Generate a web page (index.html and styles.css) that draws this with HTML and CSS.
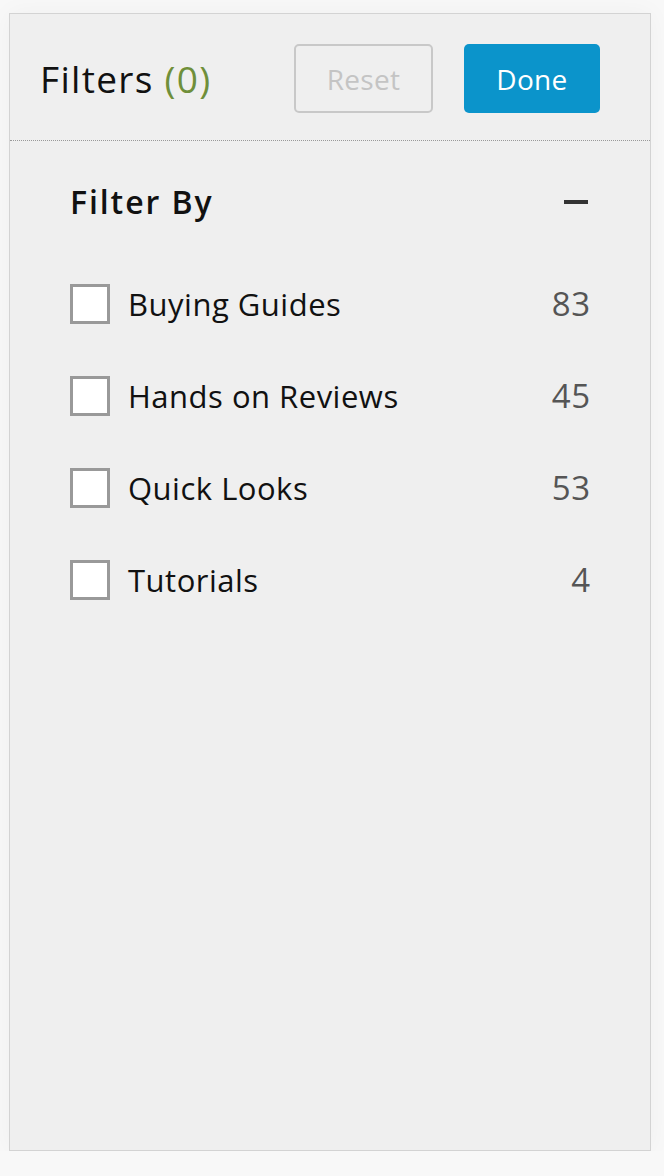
FILE: index.html
```html
<!DOCTYPE html>
<html lang="en">
  <head>
    <meta charset="UTF-8" />
    <meta name="viewport" content="width=device-width, initial-scale=1.0" />
    <title>Filters</title>
    <link rel="stylesheet" href="styles.css">
  </head>
  <body>
    <aside class="filter-panel" aria-label="Filters">
      <header class="panel-header">
        <h2 class="panel-title">Filters <span class="filter-count">(0)</span></h2>
        <div class="panel-actions">
          <button class="btn btn-reset" disabled>Reset</button>
          <button class="btn btn-done">Done</button>
        </div>
      </header>

      <section class="filter-group">
        <div class="group-head">
          <h3 class="group-title">Filter By</h3>
          <button class="collapse-toggle" aria-label="Collapse"></button>
        </div>
        <ul class="option-list">
          <li class="option">
            <label class="option-label">
              <span class="checkbox"></span>
              <span class="option-name">Buying Guides</span>
            </label>
            <span class="option-count">83</span>
          </li>
          <li class="option">
            <label class="option-label">
              <span class="checkbox"></span>
              <span class="option-name">Hands on Reviews</span>
            </label>
            <span class="option-count">45</span>
          </li>
          <li class="option">
            <label class="option-label">
              <span class="checkbox"></span>
              <span class="option-name">Quick Looks</span>
            </label>
            <span class="option-count">53</span>
          </li>
          <li class="option">
            <label class="option-label">
              <span class="checkbox"></span>
              <span class="option-name">Tutorials</span>
            </label>
            <span class="option-count">4</span>
          </li>
        </ul>
      </section>
    </aside>
  </body>
</html>
```

FILE: styles.css
```css
* {
  padding: 0;
  margin: 0;
  box-sizing: border-box;
}

body {
  background-color: #f8f8f8;
  font-family: "Open Sans", "Noto Sans", sans-serif;
  color: #111;
}

.filter-panel {
  width: 642px;
  height: 1138px;
  margin: 13px 0 0 9px;
  background-color: #efefef;
  border: 1px solid #d3d3d3;
  box-shadow: 0 0 24px rgba(0, 0, 0, 0.04);
}

.panel-header {
  display: flex;
  justify-content: space-between;
  align-items: center;
  padding: 30px 50px 27px 30px;
  border-bottom: 1px dotted #999;
}

.panel-title {
  font-size: 37px;
  font-weight: 400;
  line-height: 50px;
  letter-spacing: 1.3px;
  color: #111;
}

.filter-count {
  color: #6f8f3a;
}

.panel-actions {
  display: flex;
  gap: 31px;
}

.btn {
  height: 69px;
  border-radius: 5px;
  font-family: inherit;
  font-size: 28px;
  letter-spacing: 0.3px;
  cursor: pointer;
}

.btn-reset {
  width: 139px;
  background: transparent;
  border: 2px solid #c8c8c8;
  color: #c4c4c4;
}

.btn-done {
  width: 136px;
  background-color: #0b94cb;
  border: none;
  color: #fff;
}

.filter-group {
  padding: 41px 61px 0 60px;
}

.group-head {
  display: flex;
  justify-content: space-between;
  align-items: center;
  height: 40px;
  margin-bottom: 62px;
}

.group-title {
  font-size: 32px;
  font-weight: 600;
  line-height: 40px;
  letter-spacing: 1.9px;
  color: #111;
}

.collapse-toggle {
  width: 24px;
  height: 4px;
  background-color: #333;
  border: none;
  margin-right: 1px;
}

.option-list {
  list-style: none;
  display: flex;
  flex-direction: column;
  gap: 52px;
}

.option {
  display: flex;
  justify-content: space-between;
  align-items: center;
  height: 40px;
  font-size: 31px;
  line-height: 40px;
  letter-spacing: 0.5px;
}

.option-label {
  display: flex;
  align-items: center;
  gap: 18px;
  cursor: pointer;
}

.checkbox {
  width: 40px;
  height: 40px;
  background-color: #fff;
  border: 3px solid #999;
}

.option-name {
  color: #111;
}

.option-count {
  font-size: 33px;
  letter-spacing: 0.8px;
  margin-right: -2px;
  color: #555;
}
```
